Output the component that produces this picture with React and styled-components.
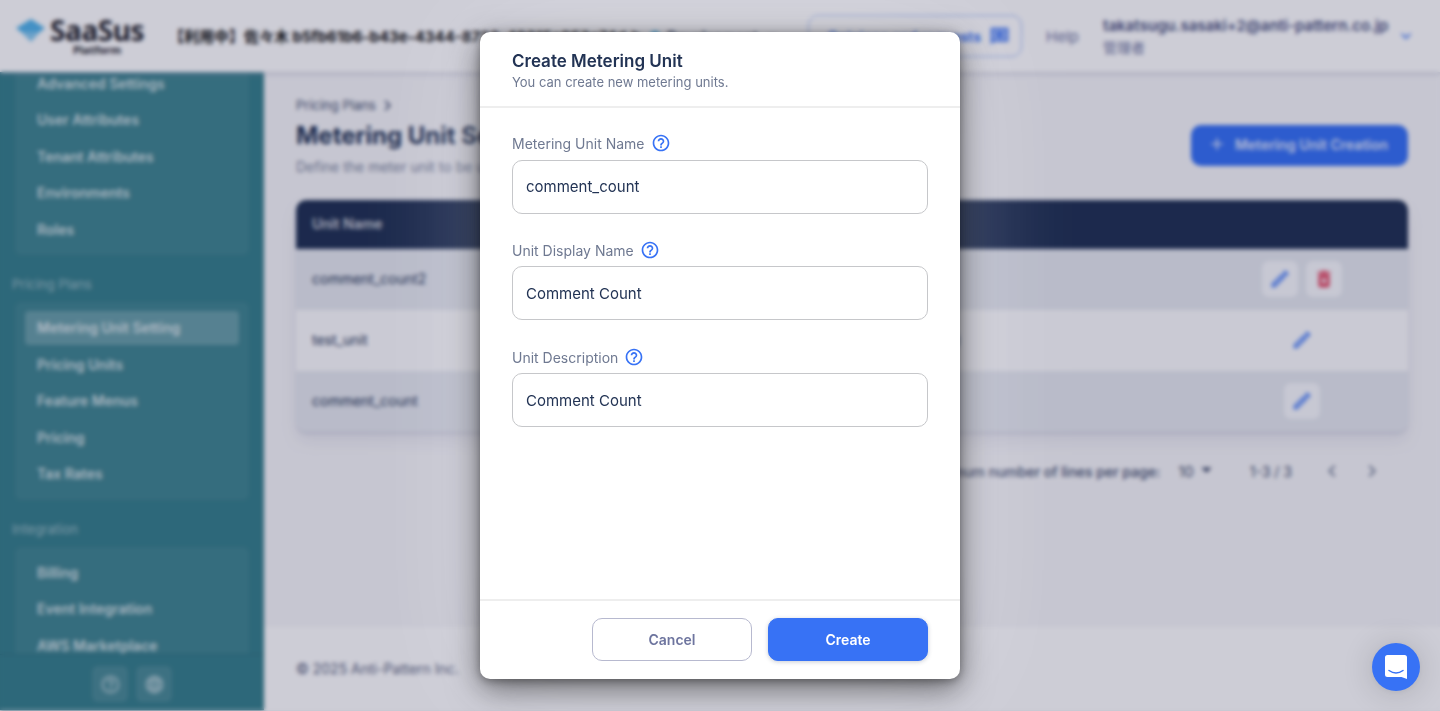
import React from "react";
import styled, { createGlobalStyle, css } from "styled-components";
import {
  MdHelpOutline,
  MdOutlineEdit,
  MdDeleteForever,
  MdAdd,
  MdLanguage,
  MdChevronRight,
  MdChevronLeft,
  MdExpandMore,
  MdArrowDropDown,
} from "react-icons/md";

const GlobalStyle = createGlobalStyle`
  * { box-sizing: border-box; }
  body {
    margin: 0;
    background: #f7f7f9;
    font-family: Inter, "Noto Sans CJK JP", sans-serif;
    font-size: 14px;
    color: #223354;
    overflow: hidden;
  }
  button, input { font: inherit; }
`;

const Page = styled.div`
  height: 710px;
  display: flex;
  flex-direction: column;
`;

/* Top bar */
const TopBar = styled.header`
  flex: none;
  height: 72px;
  display: flex;
  align-items: center;
  padding: 0 24px 0 16px;
  background: #fff;
  box-shadow: 0 2px 3px rgba(159, 162, 191, 0.14), 0 1px 6px rgba(159, 162, 191, 0.4);
  z-index: 2;
`;
const Logo = styled.div`
  display: flex;
  align-items: flex-start;
  width: 153px;
  gap: 5px;
  svg { margin-top: 2px; }
`;
const LogoText = styled.div`
  display: flex;
  flex-direction: column;
  align-items: center;
  font-family: "Noto Sans", sans-serif;
  font-weight: 700;
  color: #24242c;
`;
const LogoName = styled.span`
  font-size: 28px;
  line-height: 27px;
  font-weight: 700;
  letter-spacing: -0.4px;
`;
const LogoSub = styled.span`
  font-size: 11px;
  line-height: 11px;
`;
const Tenant = styled.div`
  width: 459px;
  padding-bottom: 1px;
  white-space: nowrap;
  font-size: 15px;
  font-weight: 700;
  color: #111;
`;
const Environment = styled.div`
  width: 180px;
  display: flex;
  align-items: center;
  gap: 7px;
  padding-left: 22px;
  font-weight: 700;
`;
const Dot = styled.i`
  width: 10px;
  height: 10px;
  border-radius: 50%;
  background: #33b2f0;
`;
const Feedback = styled.button`
  width: 214px;
  height: 42px;
  display: flex;
  align-items: center;
  justify-content: flex-end;
  gap: 8px;
  padding: 0 11px;
  white-space: nowrap;
  border: 1px solid #9bb8fa;
  border-radius: 10px;
  background: transparent;
  font-weight: 700;
  color: #3772f5;
`;
const HelpLink = styled.span`
  margin-left: 24px;
  width: 57px;
  font-size: 15px;
  color: #6e759f;
`;
const Account = styled.div`
  flex: 1;
  display: flex;
  align-items: center;
  justify-content: space-between;
  svg { font-size: 20px; color: #3772f5; }
`;
const AccountText = styled.div`
  padding-top: 2px;
`;
const AccountName = styled.div`
  font-size: 15px;
  line-height: 20px;
  font-weight: 600;
  color: #4a5280;
  letter-spacing: 0.03px;
`;
const AccountRole = styled.div`
  font-size: 14px;
  line-height: 23px;
  color: #6e759f;
`;

const Body = styled.div`
  flex: 1;
  min-height: 0;
  display: flex;
`;

/* Sidebar */
const Sidebar = styled.nav`
  width: 264px;
  flex: none;
  display: flex;
  flex-direction: column;
  background: #38818c;
`;
const MenuScroll = styled.div`
  flex: 1;
  min-height: 0;
  overflow: hidden;
  border-bottom: 1px solid #307480;
`;
const MenuContent = styled.div`
  margin-top: -14.4px;
  padding-right: 15px;
`;
const MenuLabel = styled.div`
  height: 36px;
  margin: 11px 0 0 12px;
  line-height: 37.5px;
  font-size: 13px;
  color: rgba(255, 255, 255, 0.5);
`;
const MenuBox = styled.div`
  display: flex;
  flex-direction: column;
  gap: 3px;
  margin-left: 15px;
  padding: 9px 10px;
  border-radius: 6px;
  background: rgba(255, 255, 255, 0.05);
`;
const MenuItem = styled.div`
  height: 33.5px;
  padding-left: 12px;
  line-height: 33.5px;
  border-radius: 4px;
  font-weight: 600;
  color: rgba(255, 255, 255, 0.78);
  ${(p) => p.$active && css`background: rgba(255, 255, 255, 0.22);`}
`;
const SidebarFooter = styled.div`
  height: 55px;
  display: flex;
  justify-content: center;
  gap: 8px;
  padding-top: 11px;
`;
const SidebarButton = styled.span`
  width: 36px;
  height: 36px;
  display: grid;
  place-items: center;
  border-radius: 6px;
  background: rgba(255, 255, 255, 0.1);
  color: rgba(255, 255, 255, 0.6);
  font-size: 21px;
`;

/* Main column */
const Main = styled.main`
  flex: 1;
  min-width: 0;
  display: flex;
  flex-direction: column;
`;
const Content = styled.section`
  flex: 1;
  padding: 22px 32px 0;
`;
const PageHead = styled.div`
  display: flex;
  align-items: flex-start;
  justify-content: space-between;
  height: 106px;
`;
const Crumbs = styled.div`
  display: flex;
  align-items: center;
  gap: 1px;
  height: 22px;
  font-size: 13px;
  color: #44506f;
  svg { font-size: 21px; }
`;
const PageTitle = styled.h1`
  margin: 1px 0 0;
  font-size: 24px;
  line-height: 38px;
  font-weight: 700;
`;
const PageLead = styled.p`
  margin: 0;
  font-size: 14px;
  line-height: 23px;
  color: #7a849b;
`;
const CreateUnit = styled.button`
  margin-top: 31px;
  width: 217px;
  height: 40.5px;
  display: flex;
  align-items: center;
  justify-content: center;
  gap: 8px;
  padding: 0 4px 2px 0;
  border: 0;
  border-radius: 10px;
  background: #3772f5;
  color: rgba(255, 255, 255, 0.85);
  font-weight: 600;
  svg { font-size: 20px; }
`;
const Table = styled.div`
  border-radius: 10px;
  overflow: hidden;
  box-shadow: 0 9px 16px rgba(159, 162, 191, 0.18), 0 2px 2px rgba(159, 162, 191, 0.32);
`;
const TableHead = styled.div`
  height: 49px;
  padding-left: 16px;
  line-height: 48px;
  background: #223354;
  color: rgba(255, 255, 255, 0.8);
  font-weight: 600;
`;
const Row = styled.div`
  height: 61px;
  display: grid;
  grid-template-columns: 350px 1fr 212px;
  align-items: center;
  padding: 0 0 1.5px 16px;
  background: ${(p) => (p.$shaded ? "#e6e9ef" : "#fcfcfd")};
`;
const Description = styled.span`
  width: 298px;
  text-align: right;
`;
const Actions = styled.div`
  display: flex;
  justify-content: center;
  gap: 8px;
`;
const Action = styled.span`
  width: 36px;
  height: 36px;
  display: grid;
  place-items: center;
  border-radius: 7px;
  background: ${(p) => (p.$plain ? "transparent" : "#f8f9fc")};
  color: ${(p) => (p.$danger ? "#e2405c" : "#3772f5")};
  font-size: 22px;
`;
const Pagination = styled.div`
  height: 78px;
  display: flex;
  align-items: center;
  justify-content: flex-end;
  padding-right: 24px;
  color: #44506f;
`;
const PageSizeLabel = styled.span`
  font-weight: 500;
`;
const PageSize = styled.span`
  display: flex;
  align-items: center;
  margin: 0 31px 0 18px;
  font-size: 15px;
  svg { font-size: 25px; margin-top: -3px; }
`;
const Pager = styled.span`
  display: flex;
  gap: 16px;
  margin-left: 28px;
  color: #7a849b;
  svg { font-size: 24px; }
`;
const Footer = styled.footer`
  height: 83px;
  padding: 0 32px;
  line-height: 84px;
  background: #fff;
  color: #5b6480;
`;

/* Dialog */
const Backdrop = styled.div`
  position: fixed;
  inset: 0;
  z-index: 10;
  display: flex;
  justify-content: center;
  padding: 32px 0;
  background: rgba(5, 5, 52, 0.2);
  backdrop-filter: blur(2px);
`;
const Dialog = styled.form`
  width: 480px;
  display: flex;
  flex-direction: column;
  border-radius: 10px;
  background: #fff;
  box-shadow: 0 10px 32px rgba(0, 0, 0, 0.5), 0 2px 10px rgba(0, 0, 0, 0.35),
    0 0 120px rgba(255, 255, 255, 0.3);
`;
const DialogHead = styled.div`
  height: 76px;
  padding: 17px 32px 0;
  border-bottom: 2px solid #eeeeee;
`;
const DialogTitle = styled.h2`
  margin: 0;
  font-size: 17px;
  line-height: 24px;
  font-weight: 600;
`;
const DialogLead = styled.p`
  margin: 0;
  font-size: 13px;
  line-height: 18px;
  color: #6f7991;
`;
const Fields = styled.div`
  flex: 1;
  display: flex;
  flex-direction: column;
  gap: 26.8px;
  padding: 25.6px 32px 0;
`;
const Field = styled.label`
  display: block;
`;
const FieldLabel = styled.span`
  display: flex;
  align-items: center;
  gap: 6px;
  height: 20px;
  margin-bottom: 6px;
  color: #6f7991;
  svg { font-size: 20px; color: #3772f5; margin-top: -1px; }
`;
const Input = styled.input`
  display: block;
  width: 100%;
  height: 54px;
  padding: 0 13px;
  border: 1px solid #c6c7ca;
  border-radius: 10px;
  background: #fff;
  color: #223354;
  font-size: 15px;
  outline: none;
`;
const DialogActions = styled.div`
  height: 80px;
  display: flex;
  justify-content: flex-end;
  gap: 16px;
  padding: 17px 32px 0;
  border-top: 2px solid #eeeeee;
`;
const Button = styled.button`
  width: 160px;
  height: 43px;
  border-radius: 10px;
  font-weight: 600;
  border: 1px solid ${(p) => (p.$primary ? "#3772f5" : "#b7b9cf")};
  background: ${(p) => (p.$primary ? "#3772f5" : "#fff")};
  color: ${(p) => (p.$primary ? "#fff" : "#6e759f")};
  box-shadow: ${(p) => (p.$primary ? "0 1px 4px rgba(34, 51, 84, 0.25)" : "none")};
`;

const Launcher = styled.div`
  position: fixed;
  right: 20px;
  bottom: 20px;
  z-index: 20;
  width: 48px;
  height: 48px;
  display: grid;
  place-items: center;
  border-radius: 50%;
  background: #3772f5;
  box-shadow: 0 1px 6px rgba(0, 0, 0, 0.06), 0 2px 32px rgba(0, 0, 0, 0.16);
`;

const menuGroups = [
  { items: ["Advanced Settings", "User Attributes", "Tenant Attributes", "Environments", "Roles"] },
  {
    label: "Pricing Plans",
    items: ["Metering Unit Setting", "Pricing Units", "Feature Menus", "Pricing", "Tax Rates"],
  },
  { label: "Integration", items: ["Billing", "Event Integration", "AWS Marketplace"] },
];

const units = [
  { name: "comment_count2", description: "", removable: true },
  { name: "test_unit", description: "test unit (for display)" },
  { name: "comment_count", description: "" },
];

const fields = [
  ["Metering Unit Name", "comment_count"],
  ["Unit Display Name", "Comment Count"],
  ["Unit Description", "Comment Count"],
];

function ReviewIcon() {
  return (
    <svg width="21" height="21" viewBox="0 0 24 24" fill="currentColor">
      <path d="M3 3H21V17H5L3 19Z" fillOpacity="0.5" stroke="currentColor" strokeWidth="2" />
      <path d="M12 4.5 13.6 8.4 17.5 10 13.6 11.6 12 15.5 10.4 11.6 6.5 10 10.4 8.4Z" />
    </svg>
  );
}

export default function App() {
  return (
    <>
      <GlobalStyle />
      <Page>
        <TopBar>
          <Logo>
            <svg width="29" height="23" viewBox="0 0 29 23">
              <path d="M15 0 29 9 24 13H5L0 9Z" fill="#53b4ea" />
              <path d="M5 13H24L15 23Z" fill="#86c9ef" />
            </svg>
            <LogoText>
              <LogoName>SaaSus</LogoName>
              <LogoSub>Platform</LogoSub>
            </LogoText>
          </Logo>
          <Tenant>【利用中】佐々木 b5fb61b6-b43e-4344-8723-49315c953c74d.b</Tenant>
          <Environment>
            <Dot />
            Development
            <MdExpandMore />
          </Environment>
          <Feedback type="button">
            Opinions and requests
            <ReviewIcon />
          </Feedback>
          <HelpLink>Help</HelpLink>
          <Account>
            <AccountText>
              <AccountName>takatsugu.sasaki+2@anti-pattern.co.jp</AccountName>
              <AccountRole>管理者</AccountRole>
            </AccountText>
            <MdExpandMore />
          </Account>
        </TopBar>
        <Body>
          <Sidebar>
            <MenuScroll>
              <MenuContent>
                {menuGroups.map((group) => (
                  <React.Fragment key={group.items[0]}>
                    {group.label && <MenuLabel>{group.label}</MenuLabel>}
                    <MenuBox>
                      {group.items.map((item) => (
                        <MenuItem key={item} $active={item === "Metering Unit Setting"}>
                          {item}
                        </MenuItem>
                      ))}
                    </MenuBox>
                  </React.Fragment>
                ))}
              </MenuContent>
            </MenuScroll>
            <SidebarFooter>
              <SidebarButton><MdHelpOutline /></SidebarButton>
              <SidebarButton><MdLanguage /></SidebarButton>
            </SidebarFooter>
          </Sidebar>
          <Main>
            <Content>
              <PageHead>
                <div>
                  <Crumbs>
                    Pricing Plans
                    <MdChevronRight />
                  </Crumbs>
                  <PageTitle>Metering Unit Setting</PageTitle>
                  <PageLead>Define the meter unit to be used.</PageLead>
                </div>
                <CreateUnit type="button">
                  <MdAdd />
                  Metering Unit Creation
                </CreateUnit>
              </PageHead>
              <Table>
                <TableHead>Unit Name</TableHead>
                {units.map((unit, i) => (
                  <Row key={unit.name} $shaded={i % 2 === 0}>
                    <span>{unit.name}</span>
                    <Description>{unit.description}</Description>
                    <Actions>
                      <Action $plain={i % 2 === 1}><MdOutlineEdit /></Action>
                      {unit.removable && <Action $danger><MdDeleteForever /></Action>}
                    </Actions>
                  </Row>
                ))}
              </Table>
              <Pagination>
                <PageSizeLabel>Maximum number of lines per page:</PageSizeLabel>
                <PageSize>
                  10
                  <MdArrowDropDown />
                </PageSize>
                1-3 / 3
                <Pager>
                  <MdChevronLeft />
                  <MdChevronRight />
                </Pager>
              </Pagination>
            </Content>
            <Footer>© 2025 Anti-Pattern Inc.</Footer>
          </Main>
        </Body>
      </Page>
      <Backdrop>
        <Dialog>
          <DialogHead>
            <DialogTitle>Create Metering Unit</DialogTitle>
            <DialogLead>You can create new metering units.</DialogLead>
          </DialogHead>
          <Fields>
            {fields.map(([label, value]) => (
              <Field key={label}>
                <FieldLabel>
                  {label}
                  <MdHelpOutline />
                </FieldLabel>
                <Input defaultValue={value} />
              </Field>
            ))}
          </Fields>
          <DialogActions>
            <Button type="button">Cancel</Button>
            <Button type="button" $primary>Create</Button>
          </DialogActions>
        </Dialog>
      </Backdrop>
      <Launcher>
        <svg width="22" height="24" viewBox="0 0 22 24">
          <path
            d="M2.5 0H19.5Q22 0 22 2.5V24L16.5 22H2.5Q0 22 0 19.5V2.5Q0 0 2.5 0Z"
            fill="#fff"
          />
          <path d="M4 15.5Q11 20.5 18 15.5" fill="none" stroke="#3772f5" strokeWidth="1.5" strokeLinecap="round" />
        </svg>
      </Launcher>
    </>
  );
}
